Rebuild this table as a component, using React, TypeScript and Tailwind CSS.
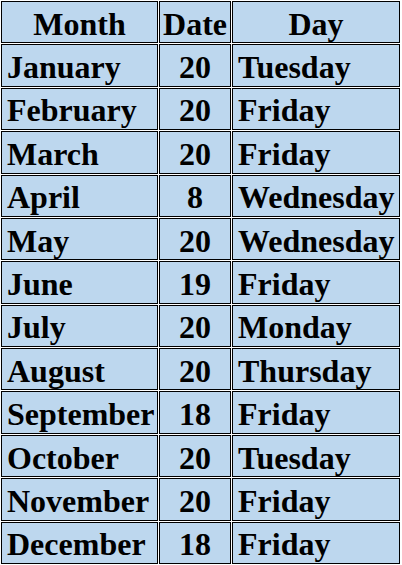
const rows: [string, number, string][] = [
  ["January", 20, "Tuesday"],
  ["February", 20, "Friday"],
  ["March", 20, "Friday"],
  ["April", 8, "Wednesday"],
  ["May", 20, "Wednesday"],
  ["June", 19, "Friday"],
  ["July", 20, "Monday"],
  ["August", 20, "Thursday"],
  ["September", 18, "Friday"],
  ["October", 20, "Tuesday"],
  ["November", 20, "Friday"],
  ["December", 18, "Friday"],
]

const cell = "border border-black bg-[#bdd7ee] flex items-center pt-[3px] whitespace-nowrap overflow-hidden"

export default function App() {
  return (
    <div
      className="w-[402px] h-[565px] bg-white p-px grid grid-cols-[157px_72px_168px] grid-rows-[repeat(13,minmax(0,1fr))] gap-px text-black font-bold text-[32px] leading-none"
      style={{ fontFamily: '"Liberation Serif", "Times New Roman", serif' }}
    >
      {/* header */}
      <div className={`${cell} justify-center`}>Month</div>
      <div className={`${cell} justify-center`}>Date</div>
      <div className={`${cell} justify-center`}>Day</div>

      {rows.map(([month, date, day]) => (
        <div key={month} className="contents">
          <div className={`${cell} pl-[5px]`}>{month}</div>
          <div className={`${cell} justify-center`}>{date}</div>
          <div className={`${cell} pl-[5px]`}>{day}</div>
        </div>
      ))}
    </div>
  )
}
